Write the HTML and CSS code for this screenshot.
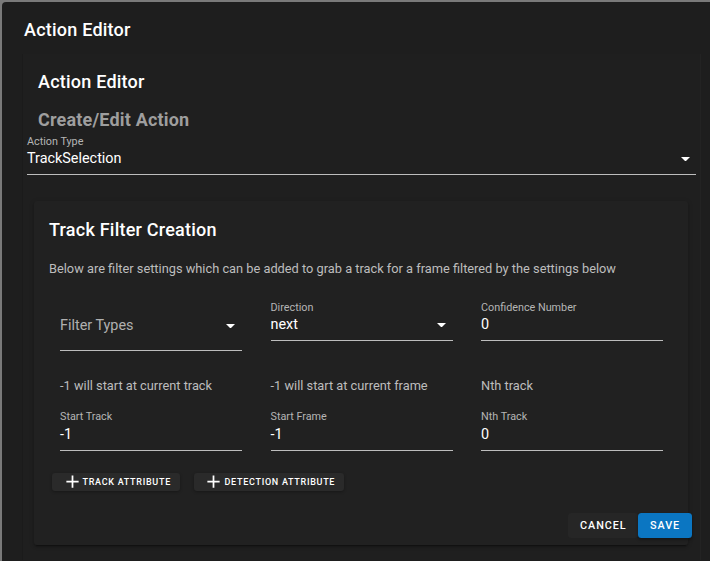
FILE: index.html
```html
<!DOCTYPE html>
<html>
<head>
<meta charset="utf-8">
<title>Action Editor</title>
<link rel="stylesheet" href="styles.css">
</head>
<body>
<div class="dialog">
  <div class="dialog-title">Action Editor</div>
  <div class="editor">
    <div class="editor-title">Action Editor</div>
    <div class="editor-subtitle">Create/Edit Action</div>
    <div class="field field-type">
      <div class="field-label">Action Type</div>
      <div class="field-value"><span>TrackSelection</span><svg class="caret caret-main" viewBox="0 0 10 5"><path d="M0 0L5 5L10 0Z"/></svg></div>
    </div>

    <div class="filter-card">
      <div class="filter-title">Track Filter Creation</div>
      <div class="filter-desc">Below are filter settings which can be added to grab a track for a frame filtered by the settings below</div>

      <div class="grid row1">
        <div class="field field-plain">
          <div class="field-value placeholder"><span>Filter Types</span><svg class="caret" viewBox="0 0 10 5"><path d="M0 0L5 5L10 0Z"/></svg></div>
        </div>
        <div class="field field-top">
          <div class="field-label">Direction</div>
          <div class="field-value"><span>next</span><svg class="caret" viewBox="0 0 10 5"><path d="M0 0L5 5L10 0Z"/></svg></div>
        </div>
        <div class="field field-top">
          <div class="field-label">Confidence Number</div>
          <div class="field-value"><span>0</span></div>
        </div>
      </div>

      <div class="grid row2">
        <div class="col">
          <div class="hint">-1 will start at current track</div>
          <div class="field field-low">
            <div class="field-label">Start Track</div>
            <div class="field-value"><span>-1</span></div>
          </div>
        </div>
        <div class="col">
          <div class="hint">-1 will start at current frame</div>
          <div class="field field-low">
            <div class="field-label">Start Frame</div>
            <div class="field-value"><span>-1</span></div>
          </div>
        </div>
        <div class="col">
          <div class="hint">Nth track</div>
          <div class="field field-low">
            <div class="field-label">Nth Track</div>
            <div class="field-value"><span>0</span></div>
          </div>
        </div>
      </div>

      <div class="attr-buttons">
        <button class="attr-btn"><svg class="plus" viewBox="0 0 24 24"><path d="M19,13H13V19H11V13H5V11H11V5H13V11H19V13Z"/></svg><span>Track Attribute</span></button>
        <button class="attr-btn"><svg class="plus" viewBox="0 0 24 24"><path d="M19,13H13V19H11V13H5V11H11V5H13V11H19V13Z"/></svg><span>Detection Attribute</span></button>
      </div>

      <div class="actions">
        <button class="act-btn cancel">Cancel</button>
        <button class="act-btn save">Save</button>
      </div>
    </div>
  </div>
</div>
</body>
</html>
```

FILE: styles.css
```css
html, body {
  margin: 0;
  padding: 0;
}

body {
  width: 710px;
  height: 561px;
  overflow: hidden;
  background: #7a7a7a;
  font-family: Roboto, "Liberation Sans", sans-serif;
  color: #fff;
}

.dialog {
  margin: 2px 0 0 2px;
  width: 708px;
  height: 559px;
  overflow: hidden;
  background: #1e1e1e;
  border-radius: 4px 0 0 0;
}

.dialog-title {
  padding: 14px 0 0 22px;
  font-size: 18px;
  font-weight: 500;
  line-height: 28.8px;
  letter-spacing: 0.0125em;
}

.editor {
  margin: 9px 0 0 21px;
  width: 677px;
  height: 506px;
  background: #1f1f1f;
  box-shadow: -1px 0 0 #1b1b1b, 1px 0 0 #232323;
}

.editor-title {
  padding: 14.4px 0 0 15px;
  font-size: 18px;
  font-weight: 500;
  line-height: 28.8px;
  letter-spacing: 0.0125em;
}

.editor-subtitle {
  margin-top: 9px;
  padding-left: 15px;
  font-size: 18px;
  font-weight: 700;
  line-height: 28px;
  letter-spacing: 0.01em;
  color: #9e9e9e;
}

.field {
  border-bottom: 1px solid #bdbdbd;
  padding-bottom: 6px;
}

.field-type {
  margin: 0 4px 0 4px;
  padding-bottom: 5px;
}

.field-label {
  font-size: 10.8px;
  line-height: 14px;
  color: #b5b5b5;
}

.field-type .field-label {
  line-height: 15px;
}

.field-value {
  display: flex;
  align-items: center;
  justify-content: space-between;
  font-size: 14.4px;
  line-height: 20px;
  color: #fff;
}

.field-value.placeholder {
  color: #b0b0b0;
}

.caret {
  width: 9px;
  height: 4.5px;
  margin-right: 7px;
  fill: #fff;
  flex: none;
}

.caret-main {
  margin-right: 6px;
}

.field-plain {
  padding-top: 16px;
  padding-bottom: 14px;
}

.field-top {
  padding-bottom: 5px;
}

.field-top .field-label {
  line-height: 15px;
}

.field-low {
  margin-top: 14px;
  padding-bottom: 5px;
}

.field-low .field-label {
  line-height: 16px;
}

.filter-card {
  margin: 26px 12px 0 11px;
  padding: 0 15px 7px 15px;
  background: #212121;
  border-radius: 3px;
  box-shadow: 0 3px 1px -2px rgba(0,0,0,.25), 0 2px 2px 0 rgba(0,0,0,.18), 0 1px 5px 0 rgba(0,0,0,.15);
}

.filter-title {
  padding-top: 15px;
  font-size: 18px;
  font-weight: 500;
  line-height: 28.8px;
  letter-spacing: 0.0125em;
}

.filter-desc {
  margin-top: 15px;
  font-size: 12.8px;
  line-height: 18px;
  color: #bdbdbd;
}

.grid {
  display: grid;
  grid-template-columns: 182px 182px 182px;
  column-gap: 28.5px;
  padding-left: 11px;
  align-items: start;
}

.row1 {
  margin-top: 22px;
}

.row2 {
  margin-top: 26px;
}

.hint {
  font-size: 12.8px;
  line-height: 18px;
  color: #bdbdbd;
}

.attr-buttons {
  margin-top: 22px;
  padding-left: 3px;
  display: flex;
  gap: 14px;
}

.attr-btn {
  display: flex;
  align-items: center;
  height: 18px;
  padding: 0 9px 0 9.5px;
  border: none;
  border-radius: 3px;
  background: #2a2a2a;
  box-shadow: 0 1px 3px rgba(0,0,0,.3);
  color: #fff;
  font-family: Roboto, "Liberation Sans", sans-serif;
  font-size: 9px;
  font-weight: 500;
  letter-spacing: 0.08em;
  text-transform: uppercase;
  cursor: pointer;
}

.plus {
  width: 21px;
  height: 21px;
  margin: -2px 0;
  fill: #fff;
  flex: none;
}

.actions {
  margin-top: 22px;
  margin-right: -19px;
  display: flex;
  justify-content: flex-end;
}

.act-btn {
  height: 25px;
  padding: 0 12px;
  border: none;
  border-radius: 3.5px;
  color: #fff;
  font-family: Roboto, "Liberation Sans", sans-serif;
  font-size: 10.8px;
  font-weight: 500;
  letter-spacing: 0.0892857em;
  text-transform: uppercase;
  cursor: pointer;
}

.cancel {
  width: 70px;
  background: #262626;
}

.save {
  width: 54px;
  background: #0b76c2;
  box-shadow: 0 2px 3px rgba(0,0,0,.35);
}
```
